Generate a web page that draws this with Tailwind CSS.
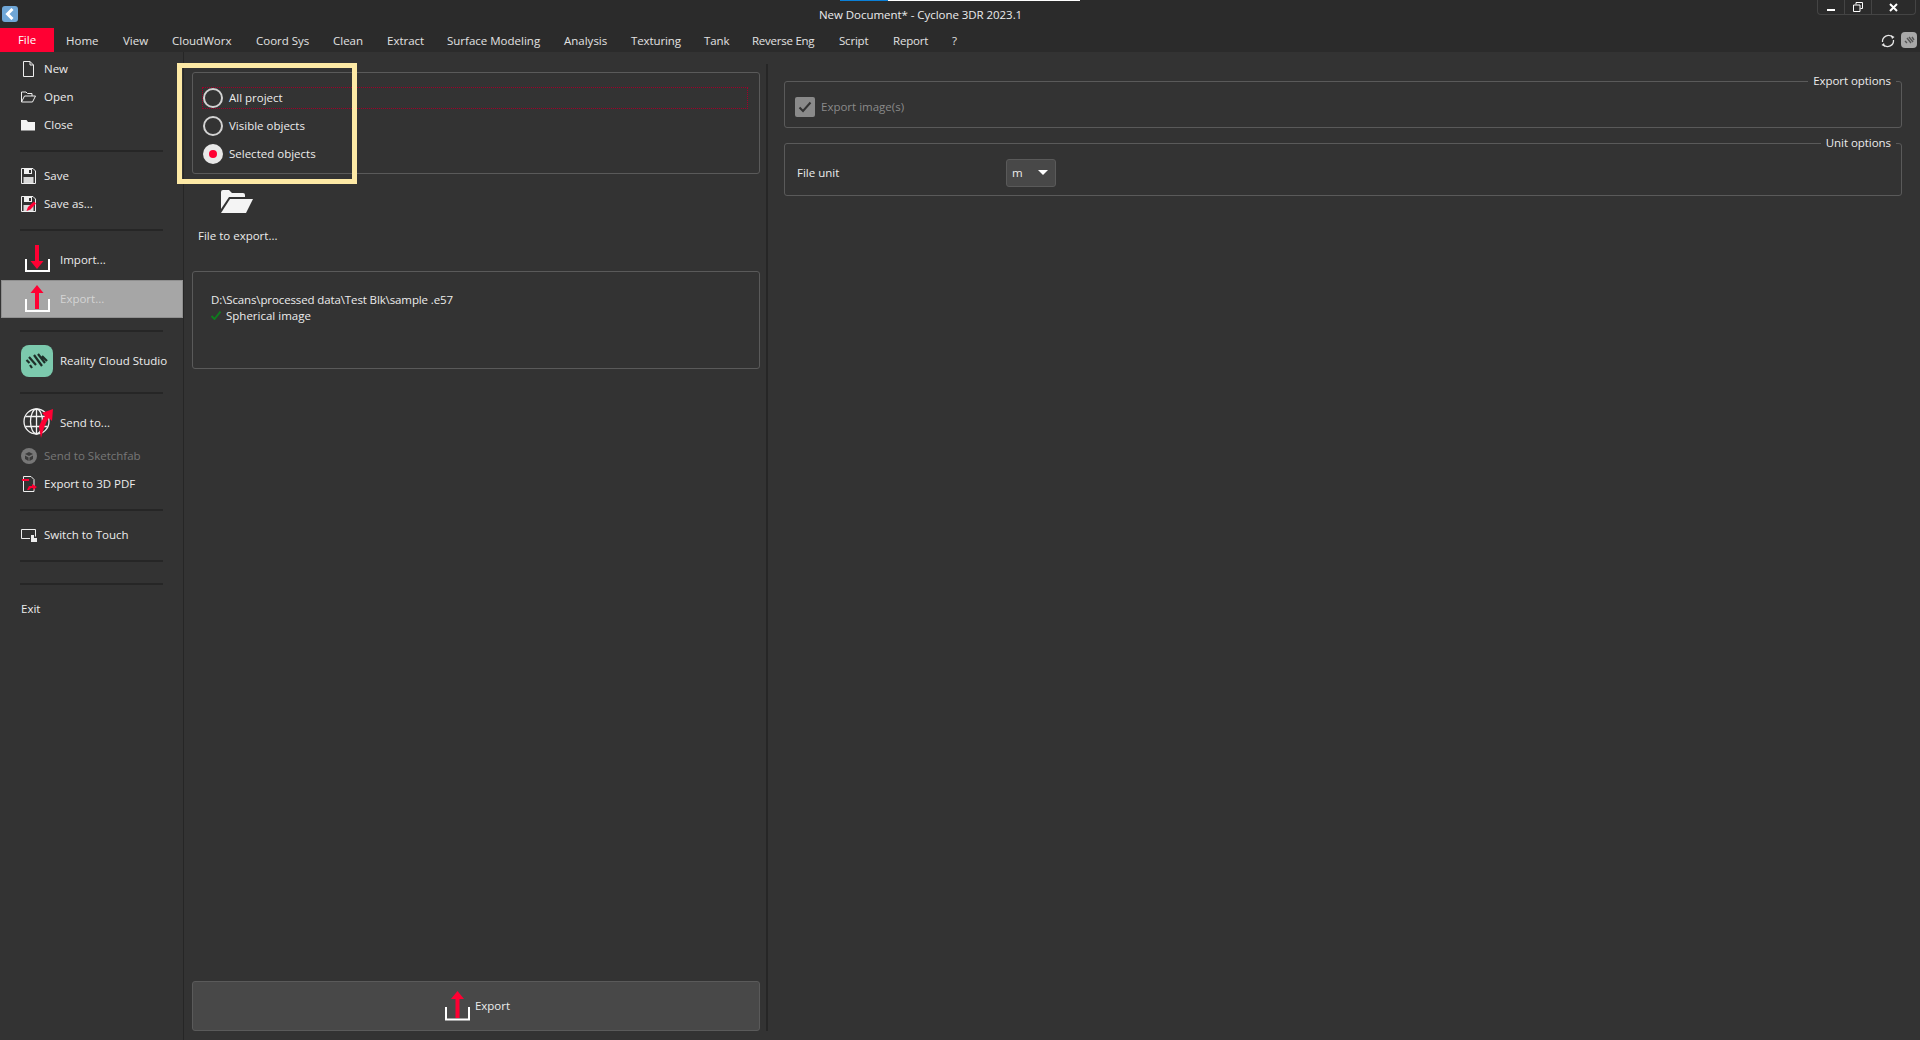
<!DOCTYPE html>
<html lang="en">
<head>
    <meta charset="UTF-8">
    <title>New Document* - Cyclone 3DR 2023.1</title>
    <script src="https://cdn.jsdelivr.net/npm/@tailwindcss/browser@4"></script>
</head>
<body class="bg-[#333333] text-[#ececec] font-['Open_Sans',sans-serif] text-[11.5px] leading-none overflow-hidden">
<div class="relative w-[1920px] h-[1040px] flex flex-col">

    <!-- Title bar -->
    <div class="relative h-[28px] bg-[#2b2b2b] flex items-center shrink-0">
        <div class="absolute top-0 left-[840px] w-[48px] h-[1px] bg-[#0a7fd6]"></div>
        <div class="absolute top-0 left-[888px] w-[192px] h-[1px] bg-white"></div>
        <div class="ml-[2px] w-[16px] h-[16px] rounded-[3px] bg-[#6fa6d6] flex items-center justify-center">
            <svg width="10" height="12" viewBox="0 0 10 12"><path d="M7.500 1 L2.500 6 L7.500 11" fill="none" stroke="#fff" stroke-width="3"/></svg>
        </div>
        <div class="ml-[801px] mt-[2px] tracking-[-0.05px]">New Document* - Cyclone 3DR 2023.1</div>
        <!-- Window buttons -->
        <div class="absolute top-0 left-[1817px] h-[15px] flex border border-t-0 border-[#444] rounded-b-[4px]">
            <div class="w-[27px] flex items-end justify-center pb-[3px] border-r border-[#444]"><div class="w-[8px] h-[2px] bg-white"></div></div>
            <div class="w-[27px] flex items-center justify-center border-r border-[#444]">
                <svg width="10" height="10" viewBox="0 0 10 10"><path d="M3 2.500V.5h6.500v6H7.500M.5 3h6.500v6.500H.5z" fill="none" stroke="#fff"/></svg>
            </div>
            <div class="w-[43px] flex items-center justify-center">
                <svg width="9" height="9" viewBox="0 0 9 9"><path d="M1 1l7 7M8 1l-7 7" stroke="#fff" stroke-width="2"/></svg>
            </div>
        </div>
    </div>

    <!-- Menu bar -->
    <div class="relative h-[24px] bg-[#2b2b2b] flex items-center shrink-0 text-[#e2e2e2]">
        <div class="w-[54px] h-full bg-[#ff0033] text-white flex items-center justify-center">File</div>
        <div class="pl-[12px] flex pt-[1px]">
            <span class="w-[57px]">Home</span>
            <span class="w-[49px]">View</span>
            <span class="w-[84px]">CloudWorx</span>
            <span class="w-[77px]">Coord Sys</span>
            <span class="w-[54px]">Clean</span>
            <span class="w-[60px]">Extract</span>
            <span class="w-[117px]">Surface Modeling</span>
            <span class="w-[67px]">Analysis</span>
            <span class="w-[73px] tracking-[-0.1px]">Texturing</span>
            <span class="w-[48px] tracking-[-0.1px]">Tank</span>
            <span class="w-[87px] tracking-[-0.25px]">Reverse Eng</span>
            <span class="w-[54px] tracking-[-0.2px]">Script</span>
            <span class="w-[59px] tracking-[-0.2px]">Report</span>
            <span>?</span>
        </div>
        <div class="absolute left-[1880px] top-[3px] flex items-center gap-[5px]">
            <svg class="mt-[2px]" width="16" height="16" viewBox="0 0 16 16"><path d="M2.500 9a6 6 0 0 1 10-5M13.500 7a6 6 0 0 1-10 5" fill="none" stroke="#e6e6e6" stroke-width="1.300"/><path d="M11 2l3.500 2-2.500 2zM5 14L1.500 12l2.500-2z" fill="#e6e6e6"/></svg>
            <div class="w-[16px] h-[16px] rounded-[4px] bg-[#a8a8a8] flex items-center justify-center">
                <svg width="11" height="8" viewBox="0 0 11 8"><path d="M1 5l2 2M3 2l4 5M5 1l4 5M8 1l2 3" stroke="#555" stroke-width="1.400"/></svg>
            </div>
        </div>
    </div>

    <div class="flex flex-1 min-h-0">
        <!-- File menu column -->
        <div class="w-[184px] shrink-0 border-r border-[#262626] pt-[3px] flex flex-col">
            <div class="h-[28px] flex items-center pl-[21px] gap-[8px]">
                <svg class="w-[15px] h-[16px]" viewBox="0 0 15 16"><path d="M2.500 .5h6.500l3.500 3.500v11.500h-10zM9 .5v3.500h3.500" fill="none" stroke="#eee"/></svg>
                <span>New</span>
            </div>
            <div class="h-[28px] flex items-center pl-[21px] gap-[8px]">
                <svg class="w-[15px] h-[16px]" viewBox="0 0 15 16"><path d="M.5 13V3h4.500l1.500 1.500h4.500v2.500M.5 13l3-6h11l-3 6z" fill="none" stroke="#eee"/></svg>
                <span>Open</span>
            </div>
            <div class="h-[28px] flex items-center pl-[21px] gap-[8px]">
                <svg class="w-[15px] h-[16px]" viewBox="0 0 15 16"><path d="M0 3h5.500l1.500 2h7v8.500H0z" fill="#f4f4f4"/></svg>
                <span>Close</span>
            </div>
            <div class="mx-[20px] h-[2px] bg-[#262626] mt-[11px] mb-[10px]"></div>
            <div class="h-[28px] flex items-center pl-[21px] gap-[8px]">
                <svg class="w-[15px] h-[16px]" viewBox="0 0 15 16"><path d="M.5 .5h11.500l2.500 2.500v12.500H.5z" fill="#333" stroke="#f0f0f0"/><path d="M3 1h8v5H3z" fill="#f0f0f0"/><path d="M8 2h2v3H8z" fill="#333"/><path d="M2.500 9h10v6h-10z" fill="#d8d8d8"/></svg>
                <span>Save</span>
            </div>
            <div class="h-[28px] flex items-center pl-[21px] gap-[8px]">
                <svg class="w-[15px] h-[16px]" viewBox="0 0 15 16"><path d="M.5 .5h11.500l2.500 2.500v12.500H.5z" fill="#333" stroke="#f0f0f0"/><path d="M3 1h8v5H3z" fill="#f0f0f0"/><path d="M8 2h2v3H8z" fill="#333"/><path d="M2.500 9h10v6h-10z" fill="#d8d8d8"/><path d="M5.500 15l1.500-4 6-5.500 2 2-5.500 6z" fill="#ff0033"/></svg>
                <span>Save as...</span>
            </div>
            <div class="mx-[20px] h-[2px] bg-[#262626] mt-[11px] mb-[10px]"></div>
            <div class="h-[38px] mb-[1px] flex items-center pl-[25px] gap-[10px]">
                <svg class="w-[25px] h-[28px] -mt-[2px]" viewBox="0 0 25 28"><path d="M1 14v12h23V14" fill="none" stroke="#fff" stroke-width="2"/><path d="M10 0h4v16h4.500l-6.500 8-6.500-8H10z" fill="#ff0033"/></svg>
                <span>Import...</span>
            </div>
            <div class="h-[38px] ml-[1px] flex items-center pl-[23px] gap-[10px] bg-[#a6a6a6] border border-[#8f8f8f] text-[#d4d4d4]">
                <svg class="w-[25px] h-[28px]" viewBox="0 0 25 28"><path d="M1 14v12h23V14" fill="none" stroke="#fff" stroke-width="2"/><path d="M12 0l6.500 8H14v16h-4V8H5.500z" fill="#ff0033"/></svg>
                <span>Export...</span>
            </div>
            <div class="mx-[20px] h-[2px] bg-[#262626] mt-[12px] mb-[10px]"></div>
            <div class="h-[38px] flex items-center pl-[21px] gap-[7px]">
                <div class="w-[32px] h-[32px] rounded-[8px] bg-[#7cc9ad] flex items-center justify-center">
                    <svg width="24" height="16" viewBox="0 0 24 16" fill="none" stroke="#1f2f29" stroke-width="2.200"><path d="M1.500 7l3 3M4 4l7 8M5 12l2 3M9 2l8 11M13 1l7 9M17 3l5 5"/></svg>
                </div>
                <span>Reality Cloud Studio</span>
            </div>
            <div class="mx-[20px] h-[2px] bg-[#262626] mt-[12px] mb-[10px]"></div>
            <div class="h-[38px] flex items-center pl-[23px] gap-[7px]">
                <svg class="w-[30px] h-[30px] -mt-[1px]" viewBox="0 0 30 30">
                    <g fill="none" stroke="#f2f2f2" stroke-width="1.300"><circle cx="13.500" cy="13.500" r="12.500"/><ellipse cx="13.500" cy="13.500" rx="6" ry="12.500"/><path d="M13.500 1v25M2.500 8.500h22M2.500 18.500h22"/></g>
                    <path d="M19 5L30 1l-1 12-3-3c-2 2-5 9-8 20l-2-11c1-4 3-7 6-11z" fill="#ff0033"/>
                </svg>
                <span>Send to...</span>
            </div>
            <div class="h-[28px] flex items-center pl-[21px] gap-[7px] text-[#777]">
                <svg class="w-[16px] h-[16px]" viewBox="0 0 16 16"><circle cx="8" cy="8" r="8" fill="#777"/><path d="M4 6l4-2 4 2-4 2zM4 7.500l3.500 2V13L4 11zM12 7.500l-3.500 2V13l3.500-2z" fill="#3a3a3a"/></svg>
                <span>Send to Sketchfab</span>
            </div>
            <div class="h-[28px] flex items-center pl-[22px] gap-[7px]">
                <svg class="w-[15px] h-[16px]" viewBox="0 0 15 16"><path d="M1.500 .5h7.500l3 3V15.500H1.500z" fill="none" stroke="#eee"/><path d="M0 3h7v2H0z" fill="#ff0033"/><path d="M5 14l2-4 3 0 0-2 5 3-4 3 0-2-2 0-2 2z" fill="#ff0033"/></svg>
                <span>Export to 3D PDF</span>
            </div>
            <div class="mx-[20px] h-[2px] bg-[#262626] mt-[11px] mb-[10px]"></div>
            <div class="h-[28px] flex items-center pl-[21px] gap-[7px]">
                <svg class="w-[16px] h-[16px]" viewBox="0 0 16 16"><path d="M9 11.500H.5v-9h14v7" fill="none" stroke="#eee"/><path d="M10 8h3v3h3v4h-6z" fill="#eee"/></svg>
                <span>Switch to Touch</span>
            </div>
            <div class="mx-[20px] h-[2px] bg-[#262626] mt-[11px]"></div>
            <div class="mx-[20px] h-[2px] bg-[#262626] mt-[21px] mb-[10px]"></div>
            <div class="h-[28px] flex items-center pl-[21px]">Exit</div>
        </div>

        <!-- Source panel -->
        <div class="w-[584px] shrink-0 mt-[12px] mb-[9px] pt-[8px] pl-[8px] pr-[6px] border-r-2 border-[#262626] flex flex-col">
            <div class="h-[102px] border border-[#5a5a5a] rounded-[3px] pt-[11px] pl-[9px] flex flex-col relative">
                <div class="absolute left-[9px] top-[14px] w-[546px] h-[22px] border border-dotted border-[#a0002a]"></div>
                <div class="h-[28px] flex items-center gap-[6px] relative">
                    <div class="ml-[1px] w-[20px] h-[20px] rounded-full border-2 border-[#d2d2d2]"></div>
                    <span>All project</span>
                </div>
                <div class="h-[28px] flex items-center gap-[6px]">
                    <div class="ml-[1px] w-[20px] h-[20px] rounded-full border-2 border-[#d2d2d2]"></div>
                    <span>Visible objects</span>
                </div>
                <div class="h-[28px] flex items-center gap-[6px]">
                    <div class="ml-[1px] w-[20px] h-[20px] rounded-full bg-[#e8e8e8] flex items-center justify-center"><div class="w-[8px] h-[8px] rounded-full bg-[#ff0033]"></div></div>
                    <span>Selected objects</span>
                </div>
            </div>
            <div class="mt-[15px] pl-[28px]">
                <svg width="33" height="24" viewBox="0 0 33 24"><path d="M1 3a2 2 0 0 1 2-2h6l3 3h11a2 2 0 0 1 2 2v2H9L1 20z" fill="#f4f4f4"/><path d="M10 10h23l-7 14H1z" fill="#f4f4f4"/></svg>
            </div>
            <div class="mt-[17px] pl-[6px]">File to export...</div>
            <div class="mt-[29px] h-[98px] border border-[#5a5a5a] rounded-[3px] pl-[18px] pt-[20px]">
                <div class="h-[16px] flex items-center tracking-[-0.12px]">D:\Scans\processed data\Test Blk\sample .e57</div>
                <div class="h-[16px] flex items-center gap-[5px]">
                    <svg width="10" height="9" viewBox="0 0 10 9"><path d="M.5 5l3 3L9.500 .5" fill="none" stroke="#0f7a1e" stroke-width="2"/></svg>
                    <span>Spherical image</span>
                </div>
            </div>
            <div class="mt-auto h-[50px] bg-[#484848] border border-[#5a5a5a] rounded-[3px] flex items-center justify-center gap-[5px] pl-[3px]">
                <svg class="w-[25px] h-[30px]" viewBox="0 0 25 30"><path d="M1 16v12.500h23V16" fill="none" stroke="#fff" stroke-width="2"/><path d="M12.500 0l6.500 8H14.500v19h-4V8H6z" fill="#ff0033"/></svg>
                <span>Export</span>
            </div>
        </div>

        <!-- Options panel -->
        <div class="flex-1 pl-[16px] pr-[18px] pt-[29px]">
            <div class="relative h-[47px] border border-[#5a5a5a] rounded-[3px] flex items-center pl-[10px] pt-[5px] gap-[6px]">
                <div class="absolute -top-[8px] right-[5px] px-[5px] bg-[#333333] h-[14px] flex items-center tracking-[-0.05px]">Export options</div>
                <div class="w-[20px] h-[20px] rounded-[2px] bg-[#8a8a8a] flex items-center justify-center">
                    <svg width="14" height="12" viewBox="0 0 14 12"><path d="M1.500 6.500l3.500 3.500 7.500-8.500" fill="none" stroke="#333" stroke-width="2"/></svg>
                </div>
                <span class="text-[#8a8a8a]">Export image(s)</span>
            </div>
            <div class="relative mt-[15px] h-[53px] border border-[#5a5a5a] rounded-[3px] flex items-center pl-[12px] pt-[6px]">
                <div class="absolute -top-[8px] right-[5px] px-[5px] bg-[#333333] h-[14px] flex items-center tracking-[-0.05px]">Unit options</div>
                <span class="w-[209px]">File unit</span>
                <div class="w-[50px] h-[28px] bg-[#484848] border border-[#5a5a5a] rounded-[3px] flex items-center justify-between pl-[5px] pr-[7px]">
                    <span>m</span>
                    <svg width="10" height="5" viewBox="0 0 10 5"><path d="M0 0h10L5 5z" fill="#fff"/></svg>
                </div>
            </div>
        </div>
    </div>

    <!-- Highlight frame drawn over the scope box -->
    <div class="absolute left-[177px] top-[63px] w-[180px] h-[121px] border-[5px] border-[#fde9a5]"></div>
</div>
</body>
</html>
